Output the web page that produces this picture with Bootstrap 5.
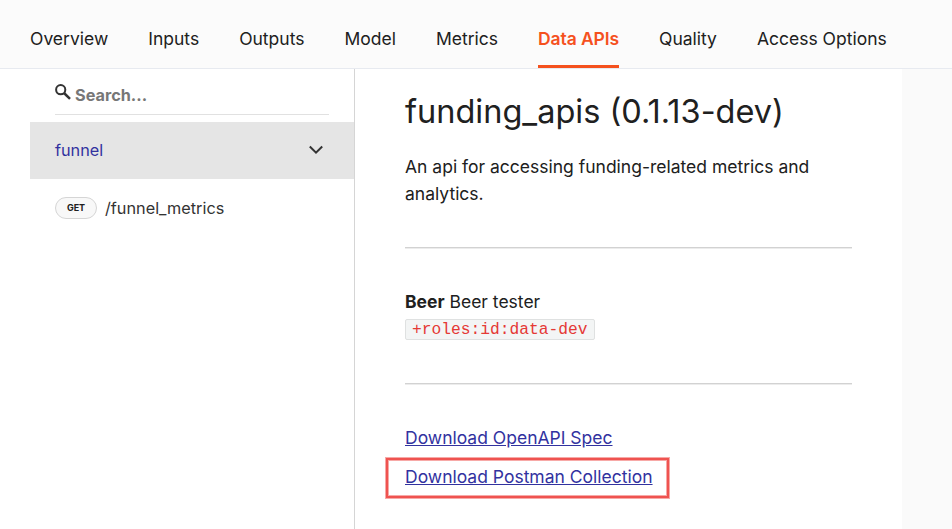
<!DOCTYPE html>
<html lang="en">
<head>
<meta charset="utf-8">
<meta name="viewport" content="width=device-width, initial-scale=1">
<title>Data APIs</title>
<link href="https://cdn.jsdelivr.net/npm/bootstrap@5.3.0/dist/css/bootstrap.min.css" rel="stylesheet">
<style>
body{font-family:Inter,sans-serif;color:#202020;background:#fff}
.shell{height:529px}
.tabs{height:69px;background:#fbfbfb;border-bottom:1px solid #e7eaf0;padding:0 30px;gap:40px;font-size:17.5px}
.tabs .nav-link{padding:12px 0 0;color:#202020;line-height:53px;height:68px;white-space:nowrap}
.tabs .nav-link.active{color:#f5511e;font-weight:600;border-bottom:3px solid #f5511e;letter-spacing:-.1px}
.side{width:325px;margin-left:30px;border-right:1px solid #d5d5d5}
.search{height:46px;margin:0 25px;border-bottom:1px solid #e1e1e1}
.search svg{margin:15px 4px 0 0}
.search input{font-size:16.25px;font-weight:700;color:#777;line-height:24px;margin-top:14px}
.search input::placeholder{color:#777;opacity:1}
.group{height:57px;margin-top:7px;padding:0 25px;background:#e5e5e5;color:#32329f;font-size:16.25px}
.group span{line-height:24px;padding-bottom:1px}
.op{height:58px;padding:0 25px;color:#333;font-size:16.25px}
.verb{width:42px;height:22px;border:1px solid #d5d5d5;background:#f8f8f8;border-radius:11px;font-size:9px;font-weight:700;color:#202020;margin-right:8px}
.doc{padding:21px 50px 0;font-size:17.5px;line-height:27px;-webkit-font-smoothing:antialiased}
.doc h1{font-size:32.5px;font-weight:400;line-height:43px;margin:0 0 20px}
.doc hr{margin:40px 0 39px;height:2px;border:0;border-top:1px solid #d2d2d2;border-bottom:1px solid #ececec;opacity:1}
.roles{height:55px}
.doc code{font-family:"Liberation Mono",monospace;font-size:16.25px;color:#e53935;background:#f3f5f5;border:1px solid #dfe1e1;border-radius:2px;padding:0 6px;line-height:19px;display:block;width:190px;height:21px;margin-top:4px}
.doc a{color:#32329f}
.callout{width:283px;height:40px;margin:7px 0 0 -19px;padding:0 0 4px 17px;border:2px solid #ef5350;box-shadow:0 0 0 1px #f7a9a7,inset 0 0 0 1px #f7a9a7}
.rail{width:50px;background:#fafafa}
</style>
</head>
<body>
<div class="shell d-flex flex-column overflow-hidden">
  <nav class="tabs nav flex-nowrap flex-shrink-0">
    <a class="nav-link" href="#">Overview</a>
    <a class="nav-link" href="#">Inputs</a>
    <a class="nav-link" href="#">Outputs</a>
    <a class="nav-link" href="#">Model</a>
    <a class="nav-link" href="#">Metrics</a>
    <a class="nav-link active" href="#">Data APIs</a>
    <a class="nav-link" href="#">Quality</a>
    <a class="nav-link" href="#">Access Options</a>
  </nav>
  <div class="d-flex flex-grow-1">
    <aside class="side flex-shrink-0">
      <div class="search d-flex align-items-start">
        <svg class="flex-shrink-0" width="16" height="16" viewBox="0 0 16 16" fill="none" stroke="#333"><circle cx="5.7" cy="5.7" r="4.6" stroke-width="2"/><path d="M9 9l6 5.8" stroke-width="2.5"/></svg>
        <input class="border-0 p-0 bg-transparent w-75" type="text" placeholder="Search...">
      </div>
      <div class="group d-flex align-items-center justify-content-between">
        <span>funnel</span>
        <svg width="26" height="26" viewBox="0 0 26 26" fill="none" stroke="#333" stroke-width="2"><path d="M6.8 8.5l6.2 6.2 6.2-6.2"/></svg>
      </div>
      <div class="op d-flex align-items-center">
        <span class="verb d-flex align-items-center justify-content-center">GET</span>
        <span>/funnel_metrics</span>
      </div>
    </aside>
    <main class="doc flex-grow-1">
      <h1>funding_apis (0.1.13-dev)</h1>
      <p class="m-0">An api for accessing funding-related metrics and<br>analytics.</p>
      <hr>
      <div class="roles"><strong>Beer</strong> Beer tester<code>+roles:id:data-dev</code></div>
      <hr>
      <div><a href="#">Download OpenAPI Spec</a></div>
      <div class="callout d-flex align-items-center"><a href="#">Download Postman Collection</a></div>
    </main>
    <div class="rail flex-shrink-0"></div>
  </div>
</div>
<script src="https://cdn.jsdelivr.net/npm/bootstrap@5.3.0/dist/js/bootstrap.bundle.min.js"></script>
</body>
</html>
